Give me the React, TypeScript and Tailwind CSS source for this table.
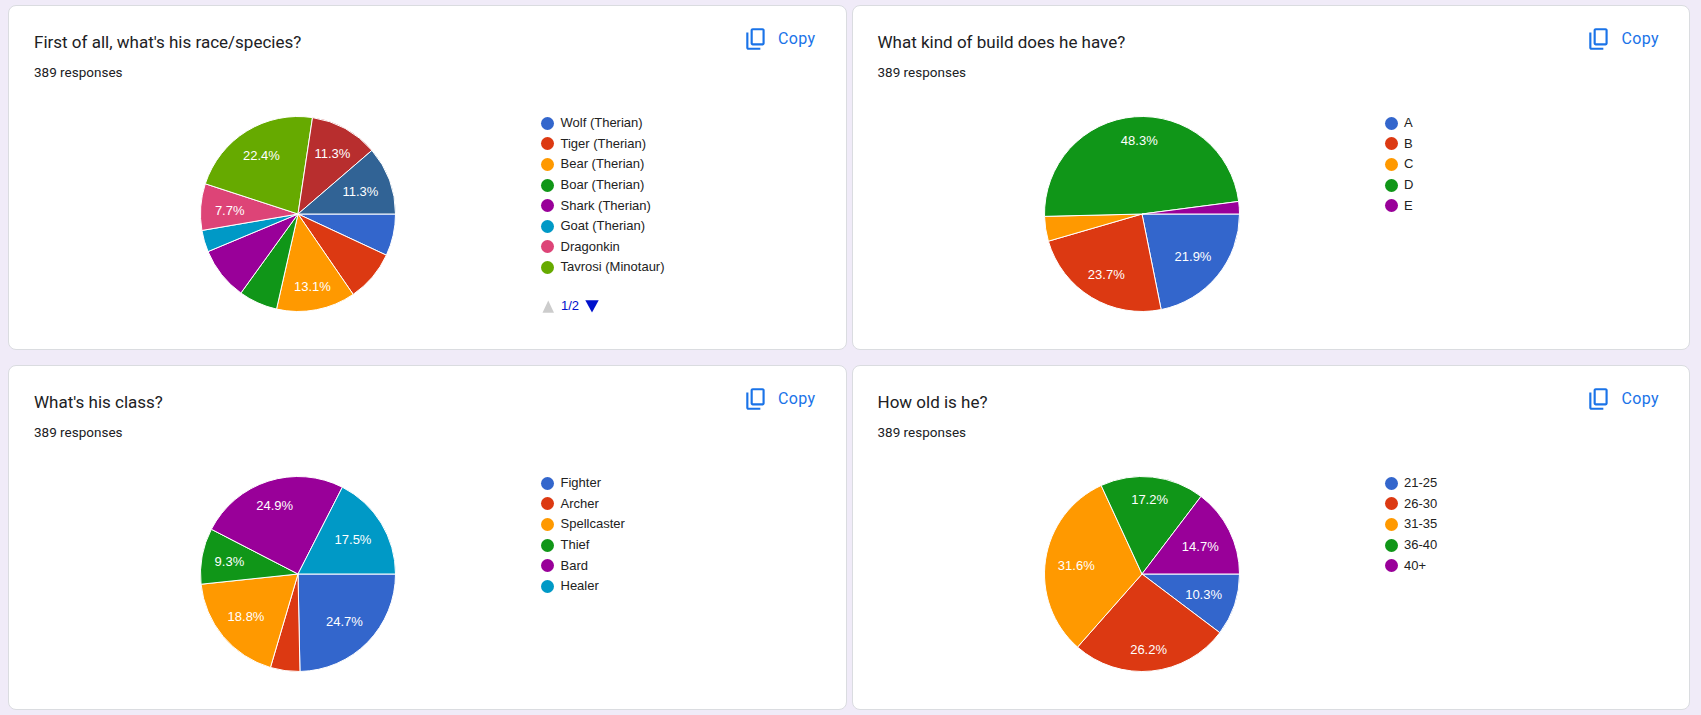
import React from "react";

const COLORS = [
  "#3366cc",
  "#dc3912",
  "#ff9900",
  "#109618",
  "#990099",
  "#0099c6",
  "#dd4477",
  "#66aa00",
  "#b82e2e",
  "#316395",
];

type Label = { text: string; dx: number; dy: number };
type ChartData = {
  title: string;
  names: string[];
  values: number[];
  labels: Label[];
  legendCount: number;
  pager?: boolean;
};

const charts: ChartData[] = [
  {
    title: "First of all, what's his race/species?",
    names: [
      "Wolf (Therian)",
      "Tiger (Therian)",
      "Bear (Therian)",
      "Boar (Therian)",
      "Shark (Therian)",
      "Goat (Therian)",
      "Dragonkin",
      "Tavrosi (Minotaur)",
      "Elf",
      "Human",
    ],
    values: [27, 33, 51, 25, 34, 14, 30, 87, 44, 44],
    labels: [
      { text: "22.4%", dx: -36.6, dy: -58.3 },
      { text: "11.3%", dx: 34.4, dy: -61 },
      { text: "11.3%", dx: 62.4, dy: -22.7 },
      { text: "7.7%", dx: -68.3, dy: -4 },
      { text: "13.1%", dx: 14.4, dy: 72.7 },
    ],
    legendCount: 8,
    pager: true,
  },
  {
    title: "What kind of build does he have?",
    names: ["A", "B", "C", "D", "E"],
    values: [85, 92, 16, 188, 8],
    labels: [
      { text: "48.3%", dx: -2.7, dy: -74 },
      { text: "21.9%", dx: 51, dy: 42.7 },
      { text: "23.7%", dx: -35.7, dy: 60 },
    ],
    legendCount: 5,
  },
  {
    title: "What's his class?",
    names: ["Fighter", "Archer", "Spellcaster", "Thief", "Bard", "Healer"],
    values: [96, 19, 73, 36, 97, 68],
    labels: [
      { text: "24.9%", dx: -23.3, dy: -68.3 },
      { text: "17.5%", dx: 55, dy: -34.3 },
      { text: "9.3%", dx: -68.6, dy: -12.3 },
      { text: "18.8%", dx: -52, dy: 42.3 },
      { text: "24.7%", dx: 46.4, dy: 47.3 },
    ],
    legendCount: 6,
  },
  {
    title: "How old is he?",
    names: ["21-25", "26-30", "31-35", "36-40", "40+"],
    values: [40, 102, 123, 67, 57],
    labels: [
      { text: "17.2%", dx: 7.6, dy: -74.3 },
      { text: "14.7%", dx: 58.3, dy: -27.7 },
      { text: "31.6%", dx: -65.7, dy: -9 },
      { text: "10.3%", dx: 61.6, dy: 20 },
      { text: "26.2%", dx: 6.6, dy: 75 },
    ],
    legendCount: 5,
  },
];

function Pie({ values, labels }: { values: number[]; labels: Label[] }) {
  const cx = 100;
  const cy = 100;
  const r = 97.5;
  const total = values.reduce((a, b) => a + b, 0);
  let angle = 90;
  const pt = (deg: number) => {
    const rad = (deg * Math.PI) / 180;
    return [cx + r * Math.sin(rad), cy - r * Math.cos(rad)];
  };
  const paths = values.map((v, i) => {
    const sweep = (v / total) * 360;
    const a0 = angle;
    const a1 = angle + sweep;
    angle = a1;
    const [x0, y0] = pt(a0);
    const [x1, y1] = pt(a1);
    const large = sweep > 180 ? 1 : 0;
    return (
      <path
        key={i}
        d={`M ${cx} ${cy} L ${x0} ${y0} A ${r} ${r} 0 ${large} 1 ${x1} ${y1} Z`}
        fill={COLORS[i % COLORS.length]}
        stroke="#ffffff"
        strokeWidth={1}
      />
    );
  });
  return (
    <svg width={200} height={200} viewBox="0 0 200 200" className="block shrink-0">
      {paths}
      {labels.map((l, i) => (
        <text
          key={i}
          x={cx + l.dx}
          y={cy + l.dy + 4.6}
          textAnchor="middle"
          fill="#ffffff"
          fontSize={13}
          fontFamily="'Liberation Sans', Arial, sans-serif"
        >
          {l.text}
        </text>
      ))}
    </svg>
  );
}

function CopyIcon() {
  return (
    <svg width={26} height={26} viewBox="0 -960 960 960" fill="#1a73e8" className="block shrink-0">
      <path d="M360-240q-33 0-56.5-23.5T280-320v-480q0-33 23.5-56.5T360-880h360q33 0 56.5 23.5T800-800v480q0 33-23.5 56.5T720-240H360Zm0-80h360v-480H360v480ZM200-80q-33 0-56.5-23.5T120-160v-560h80v560h440v80H200Zm160-240v-480 480Z" />
    </svg>
  );
}

function Card({ chart }: { chart: ChartData }) {
  return (
    <div className="h-[345px] bg-white border border-[#dadce0] rounded-[8px] pl-[25px] pr-[30px] pt-[24px] overflow-hidden">
      <div className="flex justify-between items-start">
        <div className="text-[17px] leading-[24px] text-[#202124] font-['Roboto',sans-serif]">
          {chart.title}
        </div>
        <div className="flex items-center gap-[9px] h-[26px] -mt-[4px]">
          <CopyIcon />
          <span className="text-[16px] leading-[26px] font-normal tracking-[0.4px] text-[#1a73e8] font-['Roboto',sans-serif]">
            Copy
          </span>
        </div>
      </div>
      <div className="mt-[8px] text-[13.5px] leading-[20px] text-[#202124] font-['Roboto',sans-serif]">
        389 responses
      </div>
      <div className="flex items-start mt-[31px] ml-[164px]">
        <div className="mt-[1px]">
          <Pie values={chart.values} labels={chart.labels} />
        </div>
        <div className="ml-[143px] font-['Liberation_Sans',Arial,sans-serif] text-[13px] text-[#222222]">
          {chart.names.slice(0, chart.legendCount).map((n, i) => (
            <div key={n} className="flex items-center h-[20.6px] gap-[6.5px]">
              <span
                className="w-[13px] h-[13px] rounded-full shrink-0"
                style={{ backgroundColor: COLORS[i % COLORS.length] }}
              />
              <span className="leading-[16px] whitespace-nowrap">{n}</span>
            </div>
          ))}
          {chart.pager && (
            <div className="flex items-center h-[20.6px] mt-[18px]">
              <svg width={13} height={13} viewBox="0 0 13 13" className="block ml-[0.5px]">
                <polygon points="6.25,0.5 12,12.8 0.5,12.8" fill="#cccccc" />
              </svg>
              <span className="ml-[6.5px] text-[#0011cc] leading-[16px]">1/2</span>
              <svg width={14} height={13} viewBox="0 0 14 13" className="block ml-[5.5px]">
                <polygon points="0.3,0.2 13.7,0.2 7,12.5" fill="#0011cc" />
              </svg>
            </div>
          )}
        </div>
      </div>
    </div>
  );
}

export default function App() {
  return (
    <div className="min-h-[715px] bg-[#f0ebf8] pl-[8px] pr-[11px] pt-[5px] pb-[5px]">
      <div className="grid grid-cols-2 gap-x-[5px] gap-y-[15px]">
        {charts.map((c, i) => (
          <Card key={i} chart={c} />
        ))}
      </div>
    </div>
  );
}
